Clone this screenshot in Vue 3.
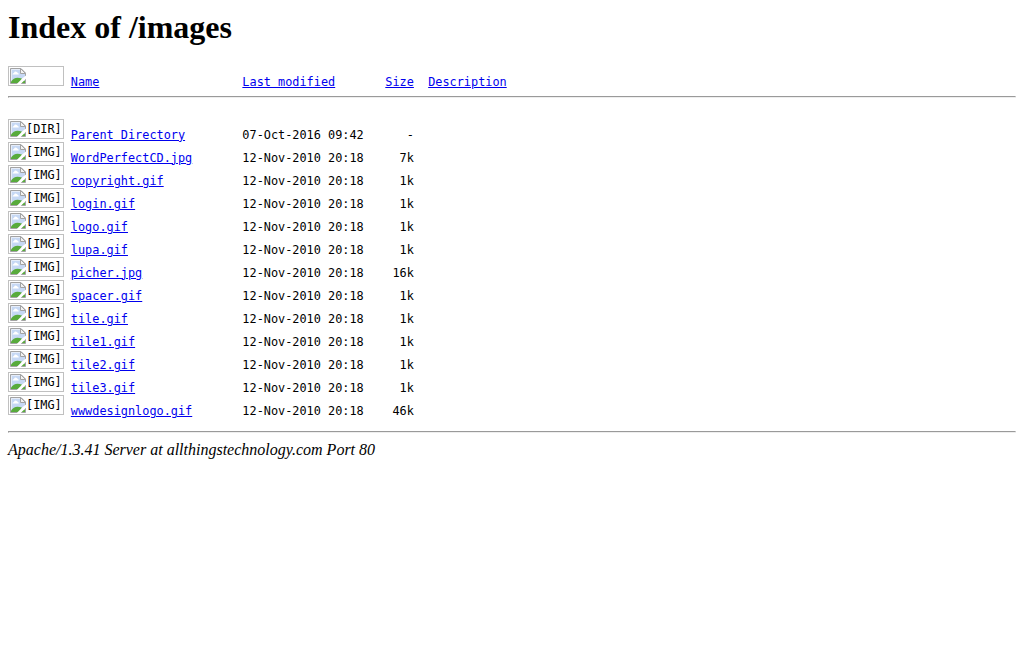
<script setup>
const files = [
  ['DIR', 'Parent Directory', '07-Oct-2016 09:42', '-'],
  ['IMG', 'WordPerfectCD.jpg', '12-Nov-2010 20:18', '7k'],
  ['IMG', 'copyright.gif', '12-Nov-2010 20:18', '1k'],
  ['IMG', 'login.gif', '12-Nov-2010 20:18', '1k'],
  ['IMG', 'logo.gif', '12-Nov-2010 20:18', '1k'],
  ['IMG', 'lupa.gif', '12-Nov-2010 20:18', '1k'],
  ['IMG', 'picher.jpg', '12-Nov-2010 20:18', '16k'],
  ['IMG', 'spacer.gif', '12-Nov-2010 20:18', '1k'],
  ['IMG', 'tile.gif', '12-Nov-2010 20:18', '1k'],
  ['IMG', 'tile1.gif', '12-Nov-2010 20:18', '1k'],
  ['IMG', 'tile2.gif', '12-Nov-2010 20:18', '1k'],
  ['IMG', 'tile3.gif', '12-Nov-2010 20:18', '1k'],
  ['IMG', 'wwwdesignlogo.gif', '12-Nov-2010 20:18', '46k'],
]
const rows = [null, ...files]
</script>

<template>
  <main class="page">
    <h1>Index of /images</h1>
    <div class="listing">
      <template v-for="(f, i) in rows" :key="i">
        <div class="row">
          <span class="thumb">
            <svg width="16" height="16" viewBox="0 0 16 16">
              <path d="M0.500 0.500H11L15.500 5V15.500H0.500Z" fill="#c6d8f4" stroke="#a3a3a3" />
              <path d="M1.500 15V1.500H10.500" fill="none" stroke="#e6edf9" />
              <path d="M2.500 6.500Q2.500 5 4 5Q4.500 3.200 6.300 3.700Q7.500 4 7.700 5Q9 5.200 8.800 6.500Z" fill="#fff" />
              <path d="M1 15V13.500Q3.500 10 7.500 9.700Q12 9.700 15 13V15Z" fill="#58ab3c" />
              <path d="M10.500 0.500V5.500H15.500Z" fill="#f2f2f2" stroke="#a3a3a3" />
              <path d="M16 7.500V10.700L10.700 16H6.800L10.500 12.300L12 10.500Z" fill="#fff" />
            </svg>
            <span v-if="f">[{{ f[0] }}]</span>
          </span>
          <template v-if="f">
            <span class="cell"><a href="#">{{ f[1] }}</a></span>
            <span class="cell">{{ f[2] }}</span>
            <span class="cell size">{{ f[3] }}</span>
          </template>
          <template v-else>
            <span class="cell"><a href="#">Name</a></span>
            <span class="cell"><a href="#">Last modified</a></span>
            <span class="cell size"><a href="#">Size</a></span>
            <span class="cell desc"><a href="#">Description</a></span>
          </template>
        </div>
        <hr v-if="!f" class="top-rule">
      </template>
    </div>
    <hr class="bottom-rule">
    <address>Apache/1.3.41 Server at allthingstechnology.com Port 80</address>
  </main>
</template>

<style>
body { background: #fff; }
</style>

<style scoped>
.page { padding: 8px; color: #000; font-family: "Liberation Serif", serif; font-size: 16px; }
h1 { margin: 0 0 19px; font-size: 32px; line-height: 39px; }
.listing { font-family: "DejaVu Sans Mono", monospace; font-size: 11.872px; white-space: pre; }
.row { display: grid; grid-template-columns: 62.850px 171.530px 121.500px 50.030px auto; height: 23px; }
.thumb { box-sizing: border-box; display: flex; width: 56px; height: 20px; padding: 1px; border: 1px solid #c0c0c0; line-height: 16px; }
.thumb svg { flex: none; display: block; }
.cell { line-height: 20px; padding-top: 6px; height: 20px; }
.size { text-align: right; }
.desc { padding-left: 14.300px; }
a { color: #0000ee; text-decoration: underline; text-decoration-thickness: 1px; text-underline-offset: 1px; }
hr { box-sizing: border-box; height: 2px; margin: 0; border: 1px solid; border-color: #9a9a9a #eee #eee #9a9a9a; }
.top-rule { margin: 7px 0 21px; }
.bottom-rule { margin: 13px 0 8px; }
address { line-height: 18px; }
</style>
